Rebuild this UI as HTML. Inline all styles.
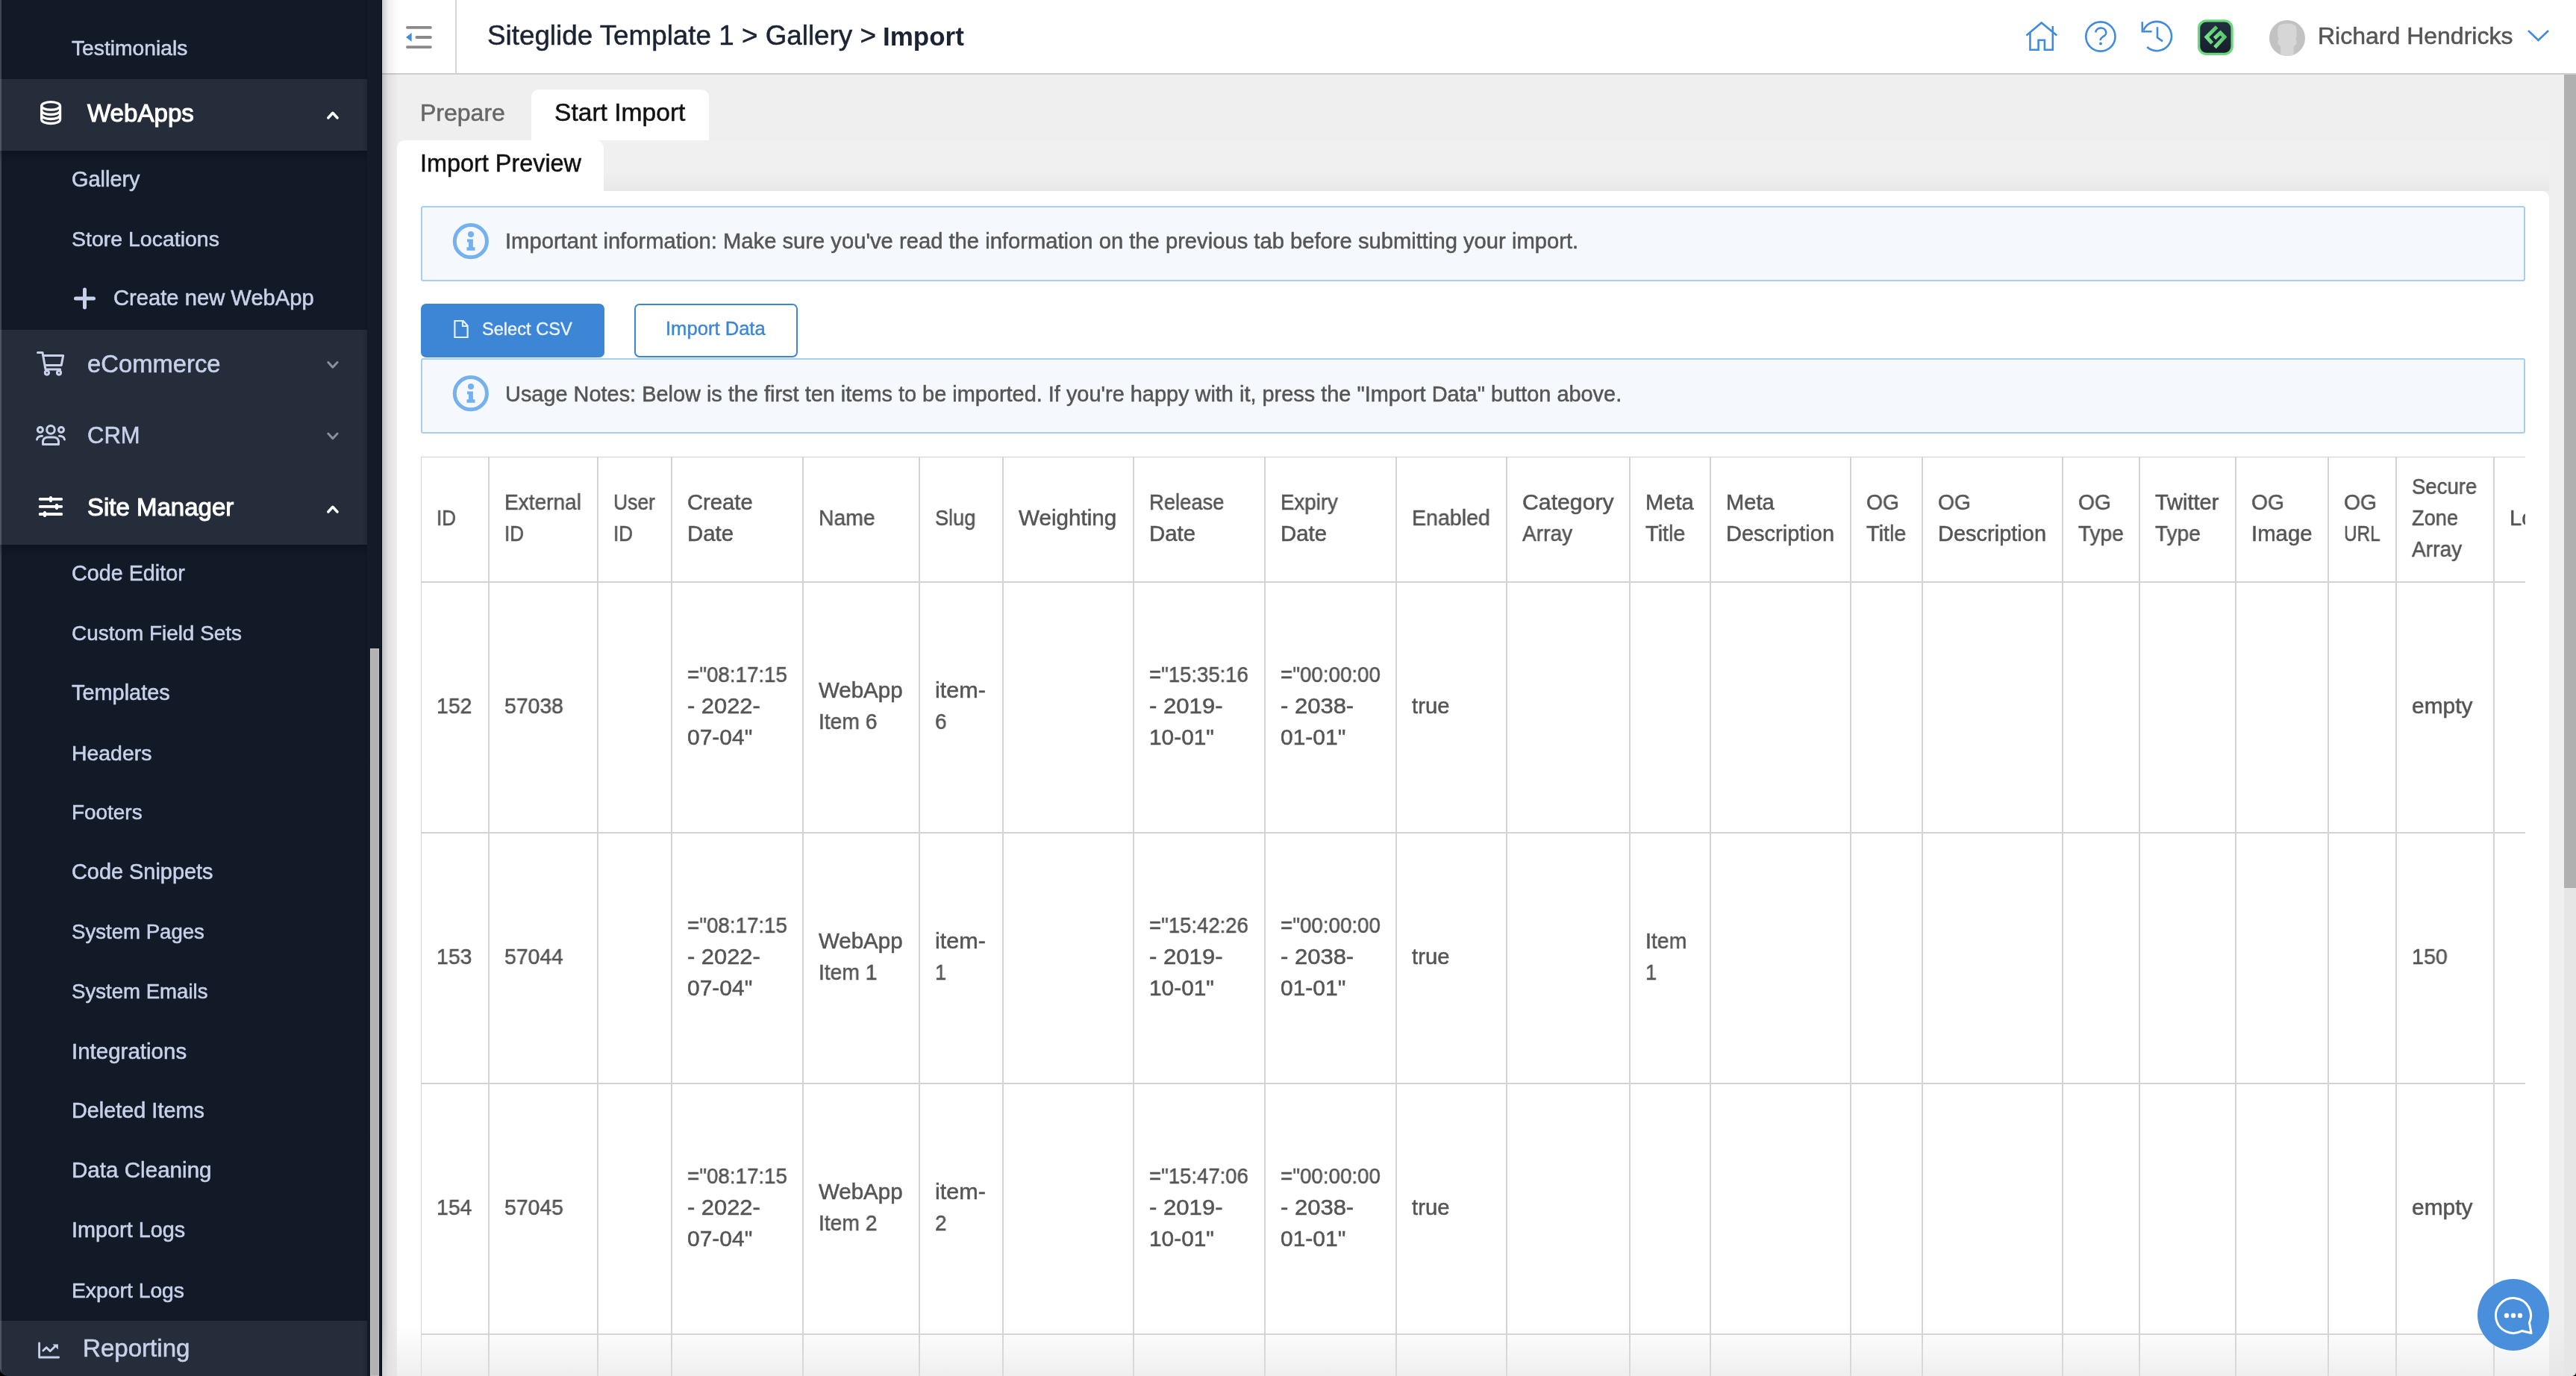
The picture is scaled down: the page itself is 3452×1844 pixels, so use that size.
<!DOCTYPE html>
<html><head><meta charset="utf-8">
<style>
html,body{margin:0;padding:0;}
body{width:3452px;height:1844px;overflow:hidden;position:relative;background:#efefef;font-family:"Liberation Sans",sans-serif;}
.a{position:absolute;}
.t{position:absolute;white-space:pre;line-height:1;will-change:transform;}
svg{position:absolute;overflow:visible;}
</style></head><body>
<div class="a" style="left:0px;top:0px;width:512px;height:1844px;background:#121a27;"></div>
<div class="a" style="left:0px;top:106px;width:492px;height:96px;background:#252c3a;"></div>
<div class="a" style="left:0px;top:442px;width:492px;height:288px;background:#252c3a;"></div>
<div class="a" style="left:0px;top:1770px;width:492px;height:74px;background:#252c3a;"></div>
<div class="a" style="left:0px;top:0px;width:2px;height:1844px;background:rgba(255,255,255,0.2);"></div>
<div class="a" style="left:492px;top:0px;width:19px;height:1844px;background:#131a28;"></div>
<div class="a" style="left:511px;top:0px;width:1px;height:1844px;background:#050b16;"></div>
<div class="a" style="left:486px;top:0px;width:6px;height:1844px;background:linear-gradient(to right,rgba(0,0,0,0),rgba(0,0,0,0.12));"></div>
<div class="a" style="left:496px;top:869px;width:12px;height:975px;background:#b3b3b3;box-shadow:inset 0 0 0 1px #c4c4c4;"></div>
<div class="a" style="left:0px;top:202px;width:492px;height:16px;background:linear-gradient(rgba(0,0,0,0.22),rgba(0,0,0,0));"></div>
<div class="a" style="left:0px;top:730px;width:492px;height:16px;background:linear-gradient(rgba(0,0,0,0.22),rgba(0,0,0,0));"></div>
<div class="t" style="left:96.0px;top:50.3px;font-size:28.26px;color:#c7d2ea;-webkit-text-stroke:0.55px #c7d2ea;">Testimonials</div>
<div class="t" style="left:96.0px;top:225.5px;font-size:28.91px;color:#c7d2ea;-webkit-text-stroke:0.55px #c7d2ea;">Gallery</div>
<div class="t" style="left:96.0px;top:306.3px;font-size:28.49px;color:#c7d2ea;-webkit-text-stroke:0.55px #c7d2ea;">Store Locations</div>
<div class="t" style="left:151.5px;top:385.0px;font-size:29.2px;color:#c7d2ea;-webkit-text-stroke:0.55px #c7d2ea;">Create new WebApp</div>
<div class="t" style="left:96.0px;top:754.2px;font-size:28.74px;color:#c7d2ea;-webkit-text-stroke:0.55px #c7d2ea;">Code Editor</div>
<div class="t" style="left:96.0px;top:834.9px;font-size:27.91px;color:#c7d2ea;-webkit-text-stroke:0.55px #c7d2ea;">Custom Field Sets</div>
<div class="t" style="left:96.0px;top:914.0px;font-size:28.92px;color:#c7d2ea;-webkit-text-stroke:0.55px #c7d2ea;">Templates</div>
<div class="t" style="left:96.0px;top:994.5px;font-size:28.41px;color:#c7d2ea;-webkit-text-stroke:0.55px #c7d2ea;">Headers</div>
<div class="t" style="left:96.0px;top:1074.9px;font-size:27.91px;color:#c7d2ea;-webkit-text-stroke:0.55px #c7d2ea;">Footers</div>
<div class="t" style="left:96.0px;top:1154.0px;font-size:28.9px;color:#c7d2ea;-webkit-text-stroke:0.55px #c7d2ea;">Code Snippets</div>
<div class="t" style="left:96.0px;top:1235.1px;font-size:27.6px;color:#c7d2ea;-webkit-text-stroke:0.55px #c7d2ea;">System Pages</div>
<div class="t" style="left:96.0px;top:1315.1px;font-size:27.6px;color:#c7d2ea;-webkit-text-stroke:0.55px #c7d2ea;">System Emails</div>
<div class="t" style="left:96.0px;top:1393.5px;font-size:29.51px;color:#c7d2ea;-webkit-text-stroke:0.55px #c7d2ea;">Integrations</div>
<div class="t" style="left:96.0px;top:1474.1px;font-size:28.84px;color:#c7d2ea;-webkit-text-stroke:0.55px #c7d2ea;">Deleted Items</div>
<div class="t" style="left:96.0px;top:1553.4px;font-size:29.6px;color:#c7d2ea;-webkit-text-stroke:0.55px #c7d2ea;">Data Cleaning</div>
<div class="t" style="left:96.0px;top:1634.1px;font-size:28.83px;color:#c7d2ea;-webkit-text-stroke:0.55px #c7d2ea;">Import Logs</div>
<div class="t" style="left:96.0px;top:1714.5px;font-size:28.3px;color:#c7d2ea;-webkit-text-stroke:0.55px #c7d2ea;">Export Logs</div>
<div class="t" style="left:117.0px;top:135.2px;font-size:33.08px;color:#ffffff;-webkit-text-stroke:1.1px #ffffff;">WebApps</div>
<div class="t" style="left:117.0px;top:471.5px;font-size:32.8px;color:#c7d2ea;-webkit-text-stroke:0.55px #c7d2ea;">eCommerce</div>
<div class="t" style="left:117.0px;top:568.4px;font-size:31px;color:#c7d2ea;-webkit-text-stroke:0.55px #c7d2ea;">CRM</div>
<div class="t" style="left:117.0px;top:663.1px;font-size:33px;color:#ffffff;-webkit-text-stroke:1.1px #ffffff;">Site Manager</div>
<div class="t" style="left:110.7px;top:1790.0px;font-size:33.1px;color:#c7d2ea;-webkit-text-stroke:0.55px #c7d2ea;">Reporting</div>
<svg style="left:0;top:0" width="1" height="1"><path d="M101.5 400H125.5M113.5 388V412" stroke="#c7d2ea" stroke-width="5" stroke-linecap="round" fill="none"/></svg>
<svg style="left:0;top:0" width="1" height="1"><path d="M439.8 158.0L445.9 151.3L452.1 158.0" stroke="#fff" stroke-width="3.5" stroke-linecap="round" stroke-linejoin="round" fill="none"/><path d="M439.8 485.5L445.9 492.2L452.1 485.5" stroke="#8a9099" stroke-width="3" stroke-linecap="round" stroke-linejoin="round" fill="none"/><path d="M439.8 581L445.9 587.7L452.1 581" stroke="#8a9099" stroke-width="3" stroke-linecap="round" stroke-linejoin="round" fill="none"/><path d="M439.8 686.0L445.9 679.3L452.1 686.0" stroke="#fff" stroke-width="3.5" stroke-linecap="round" stroke-linejoin="round" fill="none"/></svg>
<svg style="left:0;top:0" width="1" height="1"><g stroke="#fff" stroke-width="3.3" fill="none"><ellipse cx="68.1" cy="141.9" rx="12.45" ry="5.3"/><path d="M55.65 141.9V160.2M80.55 141.9V160.2"/><path d="M55.65 148.2A12.45 5.3 0 0 0 80.55 148.2"/><path d="M55.65 154.2A12.45 5.3 0 0 0 80.55 154.2"/><path d="M55.65 160.2A12.45 5.3 0 0 0 80.55 160.2"/></g></svg>
<svg style="left:0;top:0" width="1" height="1"><g stroke="#c7d2ea" stroke-width="3" fill="none" stroke-linecap="round" stroke-linejoin="round"><path d="M50.5 472.4H57L61 494.9H80.7"/><path d="M57.8 476.4H84.7L82.2 489.4H60.5"/><circle cx="62.9" cy="499.6" r="2.6"/><circle cx="79" cy="499.6" r="2.6"/></g></svg>
<svg style="left:0;top:0" width="1" height="1"><g stroke="#c7d2ea" stroke-width="3" fill="none" stroke-linecap="round" stroke-linejoin="round"><circle cx="68" cy="575.9" r="5.3"/><circle cx="53.9" cy="576" r="3.5"/><circle cx="82" cy="576" r="3.5"/><path d="M57.5 595.5V591A6.5 6.5 0 0 1 64 585.9H72A6.5 6.5 0 0 1 78.5 591V595.5Z"/><path d="M56.5 584.2A7 5 0 0 0 49.5 589"/><path d="M79.5 584.2A7 5 0 0 1 86.5 589"/></g></svg>
<svg style="left:0;top:0" width="1" height="1"><g fill="#fff"><rect x="51.9" y="667.0" width="32.1" height="3.8" rx="1.5"/><rect x="65.9" y="664.9" width="4.2" height="8" rx="2"/><rect x="51.9" y="677.0" width="32.1" height="3.8" rx="1.5"/><rect x="73.9" y="674.9" width="4.2" height="8" rx="2"/><rect x="51.9" y="687.1" width="32.1" height="3.8" rx="1.5"/><rect x="57.9" y="685" width="4.2" height="8" rx="2"/></g></svg>
<svg style="left:0;top:0" width="1" height="1"><g stroke="#c7d2ea" stroke-width="2.8" fill="none" stroke-linecap="round" stroke-linejoin="round"><path d="M52.6 1800V1819H78.7"/><path d="M57.8 1810L62.2 1805.8L67.2 1810.7L74 1804"/></g><path d="M70.4 1801.4H77.9V1808.6Z" fill="#c7d2ea"/></svg>
<div class="a" style="left:512px;top:0px;width:2940px;height:98px;background:#fff;"></div>
<div class="a" style="left:512px;top:98px;width:2940px;height:2px;background:#cdcdcd;"></div>
<div class="a" style="left:512px;top:0px;width:22px;height:1844px;background:linear-gradient(to right,rgba(0,0,0,0.20),rgba(0,0,0,0.06) 40%,rgba(0,0,0,0));"></div>
<svg style="left:0;top:0" width="1" height="1"><g fill="#8a8a8a"><rect x="544" y="35" width="34.8" height="3.8" rx="1.9"/><rect x="556.4" y="48.1" width="22.4" height="3.8" rx="1.9"/><rect x="544" y="61.2" width="34.8" height="3.8" rx="1.9"/></g><path d="M544 49.9L551.6 44V55.8Z" fill="#3d8ee0"/></svg>
<div class="a" style="left:610px;top:0px;width:2px;height:98px;background:#d4d4d4;"></div>
<div class="t" style="left:653.0px;top:29.8px;font-size:36.8px;color:#1b2433;-webkit-text-stroke:0.5px #1b2433;">Siteglide Template 1 &gt; Gallery &gt; </div>
<div class="t" style="left:1183.0px;top:31.4px;font-size:35px;color:#1b2433;font-weight:700;">Import</div>
<svg style="left:0;top:0" width="1" height="1"><g stroke="#3f8bdf" stroke-width="2.6" fill="none" stroke-linecap="butt" stroke-linejoin="miter">
<path d="M2715.5 47.5L2735.7 30.5L2756.3 47.5"/>
<path d="M2750.8 35V43"/>
<path d="M2720.5 43.5V66.8H2731.6V53.7H2739.9V66.8H2750.8V43.5"/>
<circle cx="2814.9" cy="49" r="19.6"/>
<path d="M2808.3 43.6A7 6 0 1 1 2818.3 49C2815.5 50.8 2814.6 52 2814.6 54"/>
<path d="M2872.5 40.5A19.6 19.6 0 1 1 2877.2 63"/>
<path d="M2870.8 29.3V42.2H2883.6"/>
<path d="M2891 36.2V50.3L2898 55.4"/>
</g><circle cx="2815" cy="58.4" r="2" fill="#3f8bdf"/></svg>
<svg style="left:0;top:0" width="1" height="1"><defs><linearGradient id="lg" x1="0" y1="0" x2="0" y2="1"><stop offset="0" stop-color="#232f41"/><stop offset="1" stop-color="#171e2b"/></linearGradient></defs>
<rect x="2946.6" y="27.8" width="44.5" height="44.5" rx="10" fill="url(#lg)" stroke="#69d97c" stroke-width="3.3"/>
<linearGradient id="gg" x1="0" y1="0" x2="1" y2="0"><stop offset="0" stop-color="#74e48b"/><stop offset="1" stop-color="#5bc46d"/></linearGradient><g stroke="url(#gg)" stroke-width="5" fill="none" stroke-linecap="butt" stroke-linejoin="miter"><path d="M2970.6 36L2957 49.6L2964.3 57.8"/><path d="M2967.6 51.3L2975.5 44L2981 49.6L2968 63.5"/></g></svg>
<svg style="left:0;top:0" width="1" height="1"><defs><clipPath id="av"><circle cx="3065" cy="51" r="24"/></clipPath></defs><circle cx="3065" cy="51" r="24" fill="#c2c2c2"/>
<path clip-path="url(#av)" d="M3052.2 40C3052.2 34 3056 31.8 3065 31.8C3074 31.8 3077.6 34 3077.6 40V48C3077.6 49.5 3076.3 50 3076.3 51.5C3076.3 53 3077.6 53.5 3077.6 55V58C3077.6 60 3073.8 61 3073.8 63V80H3056.2V63C3056.2 61 3052.4 60 3052.4 58V55C3052.4 53.5 3053.6 53 3053.6 51.5C3053.6 50 3052.2 49.5 3052.2 48Z" fill="#d6d6d6"/></svg>
<div class="t" style="left:3106.0px;top:31.9px;font-size:32px;color:#555555;-webkit-text-stroke:0.5px #555555;">Richard Hendricks</div>
<svg style="left:0;top:0" width="1" height="1"><path d="M3388 41L3401.5 54L3415 41" stroke="#3f8bdf" stroke-width="2.6" fill="none"/></svg>
<div class="a" style="left:3436px;top:100px;width:16px;height:1744px;background:#e6e6e6;"></div>
<div class="a" style="left:3436px;top:100px;width:16px;height:1090px;background:#b0b0b0;"></div>
<div class="t" style="left:563.0px;top:135.4px;font-size:32px;color:#666666;-webkit-text-stroke:0.5px #666666;">Prepare</div>
<div class="a" style="left:712px;top:120px;width:238px;height:68px;background:#fff;border-radius:10px 10px 0 0;"></div>
<div class="t" style="left:742.8px;top:134.1px;font-size:33.6px;color:#111111;-webkit-text-stroke:0.5px #111111;">Start Import</div>
<div class="a" style="left:532px;top:188px;width:2884px;height:68px;background:linear-gradient(#f0f0f0 0%,#f0f0f0 60%,#e8e8e8 100%);"></div>
<div class="a" style="left:532px;top:188px;width:277px;height:68px;background:#fff;border-radius:10px 10px 0 0;"></div>
<div class="t" style="left:562.8px;top:203.2px;font-size:32.4px;color:#111111;-webkit-text-stroke:0.5px #111111;">Import Preview</div>
<div class="a" style="left:532px;top:256px;width:2884px;height:1588px;background:#fff;border-radius:0 10px 0 0;"></div>
<div class="a" style="left:564px;top:276px;width:2820px;height:101px;background:#f5f8fc;border:2px solid #a9cdee;box-sizing:border-box;border-radius:3px;"></div>
<svg style="left:0;top:0" width="1" height="1"><circle cx="630.85" cy="323.2" r="21.6" stroke="#74b1ee" stroke-width="5" fill="none"/>
<circle cx="631" cy="314.0" r="4" fill="#74b1ee"/>
<path d="M626 320.5H633.9V331.2H636.5V335.8H625.5V331.2H628V324.5H626Z" fill="#74b1ee"/></svg>
<div class="t" style="left:677.0px;top:309.3px;font-size:29.2px;color:#555555;-webkit-text-stroke:0.5px #555555;">Important information: Make sure you've read the information on the previous tab before submitting your import.</div>
<div class="a" style="left:564px;top:407px;width:246px;height:72px;background:#3d85d5;border-radius:7px;"></div>
<svg style="left:0;top:0" width="1" height="1"><path d="M609.4 430H620.8L626.6 436.4V452H609.4Z M620 430V437H626.6" stroke="#e6f0fb" stroke-width="2.2" fill="none"/></svg>
<div class="t" style="left:646.0px;top:430.0px;font-size:23.6px;color:#eef4fc;-webkit-text-stroke:0.4px #eef4fc;">Select CSV</div>
<div class="a" style="left:850px;top:407px;width:219px;height:72px;background:#fff;border:2px solid #3d85d5;box-sizing:border-box;border-radius:7px;"></div>
<div class="t" style="left:892.0px;top:428.3px;font-size:25.6px;color:#3d85d5;-webkit-text-stroke:0.4px #3d85d5;">Import Data</div>
<div class="a" style="left:564px;top:480px;width:2820px;height:101px;background:#f5f8fc;border:2px solid #a9cdee;box-sizing:border-box;border-radius:3px;"></div>
<svg style="left:0;top:0" width="1" height="1"><circle cx="630.85" cy="527.2" r="21.6" stroke="#74b1ee" stroke-width="5" fill="none"/>
<circle cx="631" cy="518.0" r="4" fill="#74b1ee"/>
<path d="M626 524.5H633.9V535.2H636.5V539.8H625.5V535.2H628V528.5H626Z" fill="#74b1ee"/></svg>
<div class="t" style="left:677.0px;top:513.5px;font-size:28.92px;color:#555555;-webkit-text-stroke:0.5px #555555;">Usage Notes: Below is the first ten items to be imported. If you're happy with it, press the "Import Data" button above.</div>
<div class="a" style="left:564px;top:612px;width:2820px;height:1232px;overflow:hidden;">
<div class="a" style="left:-1px;top:-1px;width:2px;height:1233px;background:#d3d3d3;"></div>
<div class="a" style="left:90px;top:-1px;width:2px;height:1233px;background:#d3d3d3;"></div>
<div class="a" style="left:236px;top:-1px;width:2px;height:1233px;background:#d3d3d3;"></div>
<div class="a" style="left:335px;top:-1px;width:2px;height:1233px;background:#d3d3d3;"></div>
<div class="a" style="left:511px;top:-1px;width:2px;height:1233px;background:#d3d3d3;"></div>
<div class="a" style="left:667px;top:-1px;width:2px;height:1233px;background:#d3d3d3;"></div>
<div class="a" style="left:779px;top:-1px;width:2px;height:1233px;background:#d3d3d3;"></div>
<div class="a" style="left:954px;top:-1px;width:2px;height:1233px;background:#d3d3d3;"></div>
<div class="a" style="left:1130px;top:-1px;width:2px;height:1233px;background:#d3d3d3;"></div>
<div class="a" style="left:1306px;top:-1px;width:2px;height:1233px;background:#d3d3d3;"></div>
<div class="a" style="left:1454px;top:-1px;width:2px;height:1233px;background:#d3d3d3;"></div>
<div class="a" style="left:1619px;top:-1px;width:2px;height:1233px;background:#d3d3d3;"></div>
<div class="a" style="left:1727px;top:-1px;width:2px;height:1233px;background:#d3d3d3;"></div>
<div class="a" style="left:1915px;top:-1px;width:2px;height:1233px;background:#d3d3d3;"></div>
<div class="a" style="left:2011px;top:-1px;width:2px;height:1233px;background:#d3d3d3;"></div>
<div class="a" style="left:2199px;top:-1px;width:2px;height:1233px;background:#d3d3d3;"></div>
<div class="a" style="left:2302px;top:-1px;width:2px;height:1233px;background:#d3d3d3;"></div>
<div class="a" style="left:2431px;top:-1px;width:2px;height:1233px;background:#d3d3d3;"></div>
<div class="a" style="left:2555px;top:-1px;width:2px;height:1233px;background:#d3d3d3;"></div>
<div class="a" style="left:2646px;top:-1px;width:2px;height:1233px;background:#d3d3d3;"></div>
<div class="a" style="left:2777px;top:-1px;width:2px;height:1233px;background:#d3d3d3;"></div>
<div class="a" style="left:-1px;top:-1px;width:2821px;height:2px;background:#d3d3d3;"></div>
<div class="a" style="left:-1px;top:167px;width:2821px;height:2px;background:#d3d3d3;"></div>
<div class="a" style="left:-1px;top:503px;width:2821px;height:2px;background:#d3d3d3;"></div>
<div class="a" style="left:-1px;top:839px;width:2821px;height:2px;background:#d3d3d3;"></div>
<div class="a" style="left:-1px;top:1175px;width:2821px;height:2px;background:#d3d3d3;"></div>
<div class="t" style="left:21.2px;top:67.8px;font-size:29px;color:#555555;transform:scaleX(0.8966);transform-origin:0 0;-webkit-text-stroke:0.5px #555555;">ID</div>
<div class="t" style="left:112.2px;top:46.9px;font-size:29px;color:#555555;transform:scaleX(0.9671);transform-origin:0 0;-webkit-text-stroke:0.5px #555555;">External</div>
<div class="t" style="left:112.2px;top:88.7px;font-size:29px;color:#555555;transform:scaleX(0.8966);transform-origin:0 0;-webkit-text-stroke:0.5px #555555;">ID</div>
<div class="t" style="left:258.2px;top:46.9px;font-size:29px;color:#555555;transform:scaleX(0.9134);transform-origin:0 0;-webkit-text-stroke:0.5px #555555;">User</div>
<div class="t" style="left:258.2px;top:88.7px;font-size:29px;color:#555555;transform:scaleX(0.8966);transform-origin:0 0;-webkit-text-stroke:0.5px #555555;">ID</div>
<div class="t" style="left:357.2px;top:46.9px;font-size:29px;color:#555555;transform:scaleX(1.0080);transform-origin:0 0;-webkit-text-stroke:0.5px #555555;">Create</div>
<div class="t" style="left:357.2px;top:88.7px;font-size:29px;color:#555555;transform:scaleX(1.0131);transform-origin:0 0;-webkit-text-stroke:0.5px #555555;">Date</div>
<div class="t" style="left:533.2px;top:67.8px;font-size:29px;color:#555555;transform:scaleX(0.9780);transform-origin:0 0;-webkit-text-stroke:0.5px #555555;">Name</div>
<div class="t" style="left:689.2px;top:67.8px;font-size:29px;color:#555555;transform:scaleX(0.9362);transform-origin:0 0;-webkit-text-stroke:0.5px #555555;">Slug</div>
<div class="t" style="left:801.2px;top:67.8px;font-size:29px;color:#555555;transform:scaleX(1.0218);transform-origin:0 0;-webkit-text-stroke:0.5px #555555;">Weighting</div>
<div class="t" style="left:976.2px;top:46.9px;font-size:29px;color:#555555;transform:scaleX(0.9445);transform-origin:0 0;-webkit-text-stroke:0.5px #555555;">Release</div>
<div class="t" style="left:976.2px;top:88.7px;font-size:29px;color:#555555;transform:scaleX(1.0131);transform-origin:0 0;-webkit-text-stroke:0.5px #555555;">Date</div>
<div class="t" style="left:1152.2px;top:46.9px;font-size:29px;color:#555555;transform:scaleX(0.9541);transform-origin:0 0;-webkit-text-stroke:0.5px #555555;">Expiry</div>
<div class="t" style="left:1152.2px;top:88.7px;font-size:29px;color:#555555;transform:scaleX(1.0131);transform-origin:0 0;-webkit-text-stroke:0.5px #555555;">Date</div>
<div class="t" style="left:1328.2px;top:67.8px;font-size:29px;color:#555555;transform:scaleX(0.9850);transform-origin:0 0;-webkit-text-stroke:0.5px #555555;">Enabled</div>
<div class="t" style="left:1476.2px;top:46.9px;font-size:29px;color:#555555;transform:scaleX(1.0425);transform-origin:0 0;-webkit-text-stroke:0.5px #555555;">Category</div>
<div class="t" style="left:1476.2px;top:88.7px;font-size:29px;color:#555555;transform:scaleX(0.9697);transform-origin:0 0;-webkit-text-stroke:0.5px #555555;">Array</div>
<div class="t" style="left:1641.2px;top:46.9px;font-size:29px;color:#555555;transform:scaleX(1.0047);transform-origin:0 0;-webkit-text-stroke:0.5px #555555;">Meta</div>
<div class="t" style="left:1641.2px;top:88.7px;font-size:29px;color:#555555;transform:scaleX(0.9944);transform-origin:0 0;-webkit-text-stroke:0.5px #555555;">Title</div>
<div class="t" style="left:1749.2px;top:46.9px;font-size:29px;color:#555555;transform:scaleX(1.0047);transform-origin:0 0;-webkit-text-stroke:0.5px #555555;">Meta</div>
<div class="t" style="left:1749.2px;top:88.7px;font-size:29px;color:#555555;transform:scaleX(0.9979);transform-origin:0 0;-webkit-text-stroke:0.5px #555555;">Description</div>
<div class="t" style="left:1937.2px;top:46.9px;font-size:29px;color:#555555;transform:scaleX(0.9734);transform-origin:0 0;-webkit-text-stroke:0.5px #555555;">OG</div>
<div class="t" style="left:1937.2px;top:88.7px;font-size:29px;color:#555555;transform:scaleX(0.9944);transform-origin:0 0;-webkit-text-stroke:0.5px #555555;">Title</div>
<div class="t" style="left:2033.2px;top:46.9px;font-size:29px;color:#555555;transform:scaleX(0.9734);transform-origin:0 0;-webkit-text-stroke:0.5px #555555;">OG</div>
<div class="t" style="left:2033.2px;top:88.7px;font-size:29px;color:#555555;transform:scaleX(0.9979);transform-origin:0 0;-webkit-text-stroke:0.5px #555555;">Description</div>
<div class="t" style="left:2221.2px;top:46.9px;font-size:29px;color:#555555;transform:scaleX(0.9734);transform-origin:0 0;-webkit-text-stroke:0.5px #555555;">OG</div>
<div class="t" style="left:2221.2px;top:88.7px;font-size:29px;color:#555555;transform:scaleX(0.9682);transform-origin:0 0;-webkit-text-stroke:0.5px #555555;">Type</div>
<div class="t" style="left:2324.2px;top:46.9px;font-size:29px;color:#555555;transform:scaleX(1.0000);transform-origin:0 0;-webkit-text-stroke:0.5px #555555;">Twitter</div>
<div class="t" style="left:2324.2px;top:88.7px;font-size:29px;color:#555555;transform:scaleX(0.9682);transform-origin:0 0;-webkit-text-stroke:0.5px #555555;">Type</div>
<div class="t" style="left:2453.2px;top:46.9px;font-size:29px;color:#555555;transform:scaleX(0.9734);transform-origin:0 0;-webkit-text-stroke:0.5px #555555;">OG</div>
<div class="t" style="left:2453.2px;top:88.7px;font-size:29px;color:#555555;transform:scaleX(1.0112);transform-origin:0 0;-webkit-text-stroke:0.5px #555555;">Image</div>
<div class="t" style="left:2577.2px;top:46.9px;font-size:29px;color:#555555;transform:scaleX(0.9734);transform-origin:0 0;-webkit-text-stroke:0.5px #555555;">OG</div>
<div class="t" style="left:2577.2px;top:88.7px;font-size:29px;color:#555555;transform:scaleX(0.8362);transform-origin:0 0;-webkit-text-stroke:0.5px #555555;">URL</div>
<div class="t" style="left:2668.2px;top:26.0px;font-size:29px;color:#555555;transform:scaleX(0.9499);transform-origin:0 0;-webkit-text-stroke:0.5px #555555;">Secure</div>
<div class="t" style="left:2668.2px;top:67.8px;font-size:29px;color:#555555;transform:scaleX(0.9395);transform-origin:0 0;-webkit-text-stroke:0.5px #555555;">Zone</div>
<div class="t" style="left:2668.2px;top:109.6px;font-size:29px;color:#555555;transform:scaleX(0.9697);transform-origin:0 0;-webkit-text-stroke:0.5px #555555;">Array</div>
<div class="t" style="left:2799.2px;top:67.8px;font-size:29px;color:#555555;-webkit-text-stroke:0.5px #555555;">Lo</div>
<div class="t" style="left:21.2px;top:319.8px;font-size:29px;color:#555555;transform:scaleX(0.9793);transform-origin:0 0;-webkit-text-stroke:0.5px #555555;">152</div>
<div class="t" style="left:112.2px;top:319.8px;font-size:29px;color:#555555;transform:scaleX(0.9777);transform-origin:0 0;-webkit-text-stroke:0.5px #555555;">57038</div>
<div class="t" style="left:357.2px;top:278.0px;font-size:29px;color:#555555;transform:scaleX(0.9557);transform-origin:0 0;-webkit-text-stroke:0.5px #555555;">="08:17:15</div>
<div class="t" style="left:357.2px;top:319.8px;font-size:29px;color:#555555;transform:scaleX(1.0642);transform-origin:0 0;-webkit-text-stroke:0.5px #555555;">- 2022-</div>
<div class="t" style="left:357.2px;top:361.6px;font-size:29px;color:#555555;transform:scaleX(1.0331);transform-origin:0 0;-webkit-text-stroke:0.5px #555555;">07-04"</div>
<div class="t" style="left:533.2px;top:298.9px;font-size:29px;color:#555555;transform:scaleX(1.0172);transform-origin:0 0;-webkit-text-stroke:0.5px #555555;">WebApp</div>
<div class="t" style="left:533.2px;top:340.7px;font-size:29px;color:#555555;transform:scaleX(0.9727);transform-origin:0 0;-webkit-text-stroke:0.5px #555555;">Item 6</div>
<div class="t" style="left:689.2px;top:298.9px;font-size:29px;color:#555555;transform:scaleX(1.0543);transform-origin:0 0;-webkit-text-stroke:0.5px #555555;">item-</div>
<div class="t" style="left:689.2px;top:340.7px;font-size:29px;color:#555555;transform:scaleX(0.9627);transform-origin:0 0;-webkit-text-stroke:0.5px #555555;">6</div>
<div class="t" style="left:976.2px;top:278.0px;font-size:29px;color:#555555;transform:scaleX(0.9479);transform-origin:0 0;-webkit-text-stroke:0.5px #555555;">="15:35:16</div>
<div class="t" style="left:976.2px;top:319.8px;font-size:29px;color:#555555;transform:scaleX(1.0729);transform-origin:0 0;-webkit-text-stroke:0.5px #555555;">- 2019-</div>
<div class="t" style="left:976.2px;top:361.6px;font-size:29px;color:#555555;transform:scaleX(1.0296);transform-origin:0 0;-webkit-text-stroke:0.5px #555555;">10-01"</div>
<div class="t" style="left:1152.2px;top:278.0px;font-size:29px;color:#555555;transform:scaleX(0.9557);transform-origin:0 0;-webkit-text-stroke:0.5px #555555;">="00:00:00</div>
<div class="t" style="left:1152.2px;top:319.8px;font-size:29px;color:#555555;transform:scaleX(1.0686);transform-origin:0 0;-webkit-text-stroke:0.5px #555555;">- 2038-</div>
<div class="t" style="left:1152.2px;top:361.6px;font-size:29px;color:#555555;transform:scaleX(1.0331);transform-origin:0 0;-webkit-text-stroke:0.5px #555555;">01-01"</div>
<div class="t" style="left:1328.2px;top:319.8px;font-size:29px;color:#555555;transform:scaleX(1.0100);transform-origin:0 0;-webkit-text-stroke:0.5px #555555;">true</div>
<div class="t" style="left:2668.2px;top:319.8px;font-size:29px;color:#555555;transform:scaleX(1.0316);transform-origin:0 0;-webkit-text-stroke:0.5px #555555;">empty</div>
<div class="t" style="left:21.2px;top:655.8px;font-size:29px;color:#555555;transform:scaleX(0.9793);transform-origin:0 0;-webkit-text-stroke:0.5px #555555;">153</div>
<div class="t" style="left:112.2px;top:655.8px;font-size:29px;color:#555555;transform:scaleX(0.9777);transform-origin:0 0;-webkit-text-stroke:0.5px #555555;">57044</div>
<div class="t" style="left:357.2px;top:614.0px;font-size:29px;color:#555555;transform:scaleX(0.9557);transform-origin:0 0;-webkit-text-stroke:0.5px #555555;">="08:17:15</div>
<div class="t" style="left:357.2px;top:655.8px;font-size:29px;color:#555555;transform:scaleX(1.0642);transform-origin:0 0;-webkit-text-stroke:0.5px #555555;">- 2022-</div>
<div class="t" style="left:357.2px;top:697.6px;font-size:29px;color:#555555;transform:scaleX(1.0331);transform-origin:0 0;-webkit-text-stroke:0.5px #555555;">07-04"</div>
<div class="t" style="left:533.2px;top:634.9px;font-size:29px;color:#555555;transform:scaleX(1.0172);transform-origin:0 0;-webkit-text-stroke:0.5px #555555;">WebApp</div>
<div class="t" style="left:533.2px;top:676.7px;font-size:29px;color:#555555;transform:scaleX(0.9727);transform-origin:0 0;-webkit-text-stroke:0.5px #555555;">Item 1</div>
<div class="t" style="left:689.2px;top:634.9px;font-size:29px;color:#555555;transform:scaleX(1.0543);transform-origin:0 0;-webkit-text-stroke:0.5px #555555;">item-</div>
<div class="t" style="left:689.2px;top:676.7px;font-size:29px;color:#555555;transform:scaleX(0.9441);transform-origin:0 0;-webkit-text-stroke:0.5px #555555;">1</div>
<div class="t" style="left:976.2px;top:614.0px;font-size:29px;color:#555555;transform:scaleX(0.9479);transform-origin:0 0;-webkit-text-stroke:0.5px #555555;">="15:42:26</div>
<div class="t" style="left:976.2px;top:655.8px;font-size:29px;color:#555555;transform:scaleX(1.0729);transform-origin:0 0;-webkit-text-stroke:0.5px #555555;">- 2019-</div>
<div class="t" style="left:976.2px;top:697.6px;font-size:29px;color:#555555;transform:scaleX(1.0296);transform-origin:0 0;-webkit-text-stroke:0.5px #555555;">10-01"</div>
<div class="t" style="left:1152.2px;top:614.0px;font-size:29px;color:#555555;transform:scaleX(0.9557);transform-origin:0 0;-webkit-text-stroke:0.5px #555555;">="00:00:00</div>
<div class="t" style="left:1152.2px;top:655.8px;font-size:29px;color:#555555;transform:scaleX(1.0686);transform-origin:0 0;-webkit-text-stroke:0.5px #555555;">- 2038-</div>
<div class="t" style="left:1152.2px;top:697.6px;font-size:29px;color:#555555;transform:scaleX(1.0331);transform-origin:0 0;-webkit-text-stroke:0.5px #555555;">01-01"</div>
<div class="t" style="left:1328.2px;top:655.8px;font-size:29px;color:#555555;transform:scaleX(1.0100);transform-origin:0 0;-webkit-text-stroke:0.5px #555555;">true</div>
<div class="t" style="left:1641.2px;top:634.9px;font-size:29px;color:#555555;transform:scaleX(0.9823);transform-origin:0 0;-webkit-text-stroke:0.5px #555555;">Item</div>
<div class="t" style="left:1641.2px;top:676.7px;font-size:29px;color:#555555;transform:scaleX(0.9441);transform-origin:0 0;-webkit-text-stroke:0.5px #555555;">1</div>
<div class="t" style="left:2668.2px;top:655.8px;font-size:29px;color:#555555;transform:scaleX(0.9876);transform-origin:0 0;-webkit-text-stroke:0.5px #555555;">150</div>
<div class="t" style="left:21.2px;top:991.8px;font-size:29px;color:#555555;transform:scaleX(0.9793);transform-origin:0 0;-webkit-text-stroke:0.5px #555555;">154</div>
<div class="t" style="left:112.2px;top:991.8px;font-size:29px;color:#555555;transform:scaleX(0.9777);transform-origin:0 0;-webkit-text-stroke:0.5px #555555;">57045</div>
<div class="t" style="left:357.2px;top:950.0px;font-size:29px;color:#555555;transform:scaleX(0.9557);transform-origin:0 0;-webkit-text-stroke:0.5px #555555;">="08:17:15</div>
<div class="t" style="left:357.2px;top:991.8px;font-size:29px;color:#555555;transform:scaleX(1.0642);transform-origin:0 0;-webkit-text-stroke:0.5px #555555;">- 2022-</div>
<div class="t" style="left:357.2px;top:1033.6px;font-size:29px;color:#555555;transform:scaleX(1.0331);transform-origin:0 0;-webkit-text-stroke:0.5px #555555;">07-04"</div>
<div class="t" style="left:533.2px;top:970.9px;font-size:29px;color:#555555;transform:scaleX(1.0172);transform-origin:0 0;-webkit-text-stroke:0.5px #555555;">WebApp</div>
<div class="t" style="left:533.2px;top:1012.7px;font-size:29px;color:#555555;transform:scaleX(0.9727);transform-origin:0 0;-webkit-text-stroke:0.5px #555555;">Item 2</div>
<div class="t" style="left:689.2px;top:970.9px;font-size:29px;color:#555555;transform:scaleX(1.0543);transform-origin:0 0;-webkit-text-stroke:0.5px #555555;">item-</div>
<div class="t" style="left:689.2px;top:1012.7px;font-size:29px;color:#555555;transform:scaleX(0.9627);transform-origin:0 0;-webkit-text-stroke:0.5px #555555;">2</div>
<div class="t" style="left:976.2px;top:950.0px;font-size:29px;color:#555555;transform:scaleX(0.9479);transform-origin:0 0;-webkit-text-stroke:0.5px #555555;">="15:47:06</div>
<div class="t" style="left:976.2px;top:991.8px;font-size:29px;color:#555555;transform:scaleX(1.0729);transform-origin:0 0;-webkit-text-stroke:0.5px #555555;">- 2019-</div>
<div class="t" style="left:976.2px;top:1033.6px;font-size:29px;color:#555555;transform:scaleX(1.0296);transform-origin:0 0;-webkit-text-stroke:0.5px #555555;">10-01"</div>
<div class="t" style="left:1152.2px;top:950.0px;font-size:29px;color:#555555;transform:scaleX(0.9557);transform-origin:0 0;-webkit-text-stroke:0.5px #555555;">="00:00:00</div>
<div class="t" style="left:1152.2px;top:991.8px;font-size:29px;color:#555555;transform:scaleX(1.0686);transform-origin:0 0;-webkit-text-stroke:0.5px #555555;">- 2038-</div>
<div class="t" style="left:1152.2px;top:1033.6px;font-size:29px;color:#555555;transform:scaleX(1.0331);transform-origin:0 0;-webkit-text-stroke:0.5px #555555;">01-01"</div>
<div class="t" style="left:1328.2px;top:991.8px;font-size:29px;color:#555555;transform:scaleX(1.0100);transform-origin:0 0;-webkit-text-stroke:0.5px #555555;">true</div>
<div class="t" style="left:2668.2px;top:991.8px;font-size:29px;color:#555555;transform:scaleX(1.0316);transform-origin:0 0;-webkit-text-stroke:0.5px #555555;">empty</div>
</div>
<div class="a" style="left:512px;top:1774px;width:2924px;height:70px;background:linear-gradient(rgba(230,230,230,0),rgba(225,225,225,0.55));"></div>
<svg style="left:0;top:0" width="1" height="1"><circle cx="3368" cy="1762" r="48" fill="#4a8fdc"/>
<path d="M3379.5 1783.5A23.5 23.5 0 1 1 3389.5 1772.5L3392 1786.5Z" stroke="#fff" stroke-width="3" fill="none" stroke-linejoin="round"/>
<circle cx="3359" cy="1763" r="3.2" fill="#fff"/><circle cx="3368" cy="1763" r="3.2" fill="#fff"/><circle cx="3377" cy="1763" r="3.2" fill="#fff"/></svg>
<svg style="left:0;top:0" width="1" height="1"><path d="M0 1834A10 10 0 0 0 10 1844H0Z" fill="#000"/><path d="M3452 1839A5 5 0 0 1 3447 1844H3452Z" fill="#000"/></svg>
</body></html>
